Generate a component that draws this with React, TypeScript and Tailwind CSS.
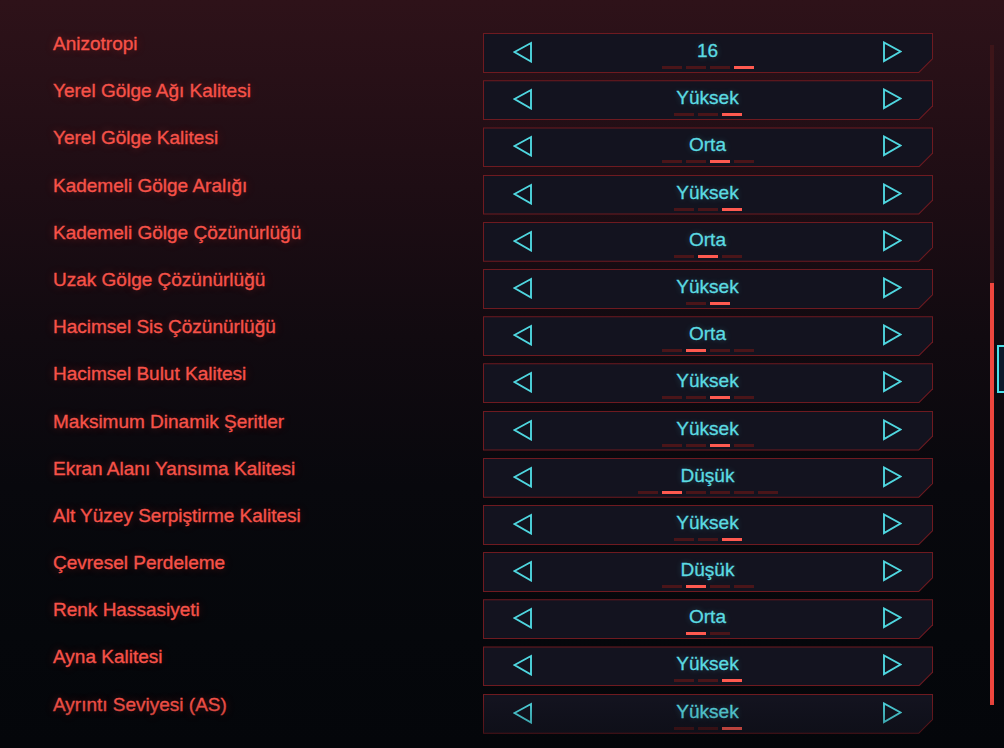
const rows: [string, string, number, number][] = [
  ["Anizotropi", "16", 4, 3],
  ["Yerel Gölge Ağı Kalitesi", "Yüksek", 3, 2],
  ["Yerel Gölge Kalitesi", "Orta", 4, 2],
  ["Kademeli Gölge Aralığı", "Yüksek", 3, 2],
  ["Kademeli Gölge Çözünürlüğü", "Orta", 3, 1],
  ["Uzak Gölge Çözünürlüğü", "Yüksek", 2, 1],
  ["Hacimsel Sis Çözünürlüğü", "Orta", 4, 1],
  ["Hacimsel Bulut Kalitesi", "Yüksek", 4, 2],
  ["Maksimum Dinamik Şeritler", "Yüksek", 4, 2],
  ["Ekran Alanı Yansıma Kalitesi", "Düşük", 6, 1],
  ["Alt Yüzey Serpiştirme Kalitesi", "Yüksek", 3, 2],
  ["Çevresel Perdeleme", "Düşük", 4, 1],
  ["Renk Hassasiyeti", "Orta", 2, 0],
  ["Ayna Kalitesi", "Yüksek", 3, 2],
  ["Ayrıntı Seviyesi (AS)", "Yüksek", 3, 2],
];

const Arrow = ({ dir }: { dir: "left" | "right" }) => (
  <svg width="20" height="22" viewBox="0 0 20 22" className="mt-[7px] shrink-0">
    <polygon
      points={dir === "left" ? "1.5,11 18,2 18,20.5" : "2,1.5 2,20 18.5,10.5"}
      fill="none"
      stroke="#4fd6df"
      strokeWidth="1.9"
      strokeLinejoin="miter"
    />
  </svg>
);

const Selector = ({ value, count, active }: { value: string; count: number; active: number }) => (
  <div className="h-10 w-[450px] bg-[#6e1a20] p-px [clip-path:polygon(0_0,100%_0,100%_calc(100%_-_14px),calc(100%_-_14px)_100%,0_100%)]">
    <div className="flex h-full items-start justify-between bg-[#13131f] pl-[29px] pr-[30px] [clip-path:polygon(0_0,100%_0,100%_calc(100%_-_13.5px),calc(100%_-_13.5px)_100%,0_100%)]">
      <Arrow dir="left" />
      <div className="flex flex-col items-center pt-[6px]">
        <span className="text-[19px] leading-[22px] text-[#5cdbe2] [-webkit-text-stroke:0.3px_#5cdbe2] [text-shadow:0_0_6px_rgba(80,220,230,0.3)]">
          {value}
        </span>
        <div className="mt-[4px] flex gap-1">
          {Array.from({ length: count }).map((_, i) => (
            <div
              key={i}
              className={i === active ? "h-[3px] w-5 bg-[#ff5a50]" : "h-[3px] w-5 bg-[#4a1519]"}
            />
          ))}
        </div>
      </div>
      <Arrow dir="right" />
    </div>
  </div>
);

export default function App() {
  return (
    <div className="relative flex h-[748px] w-[1004px] overflow-hidden bg-[linear-gradient(180deg,#2e1219_0%,#1e0d14_25%,#110a10_45%,#08080d_65%,#05070b_85%,#04060a_100%)] font-['Liberation_Sans',Arial,sans-serif]">
      <div className="flex w-[990px] flex-col gap-[7.2px] pl-[53px] pt-[33px]">
        {rows.map(([label, value, count, active]) => (
          <div key={label} className="flex h-10 items-start">
            <span className="mt-[-1px] w-[430px] text-[19px] leading-6 text-[#f65249] [-webkit-text-stroke:0.35px_#f65249] [text-shadow:0_0_8px_rgba(255,60,50,0.35)]">
              {label}
            </span>
            <Selector value={value} count={count} active={active} />
          </div>
        ))}
      </div>
      <div className="flex w-1 flex-col pt-[45px]">
        <div className="h-[238px] bg-[#3d1519]" />
        <div className="h-[422px] bg-[#ee463e]" />
      </div>
      <div className="absolute left-[997px] top-[345px] h-[48px] w-[12px] border-2 border-[#4ae0ea] bg-[#0c1a2c]" />
      <div className="pointer-events-none absolute inset-x-0 bottom-0 h-[50px] bg-[linear-gradient(180deg,rgba(4,6,10,0)_0%,rgba(4,6,10,0.45)_100%)]" />
    </div>
  );
}
